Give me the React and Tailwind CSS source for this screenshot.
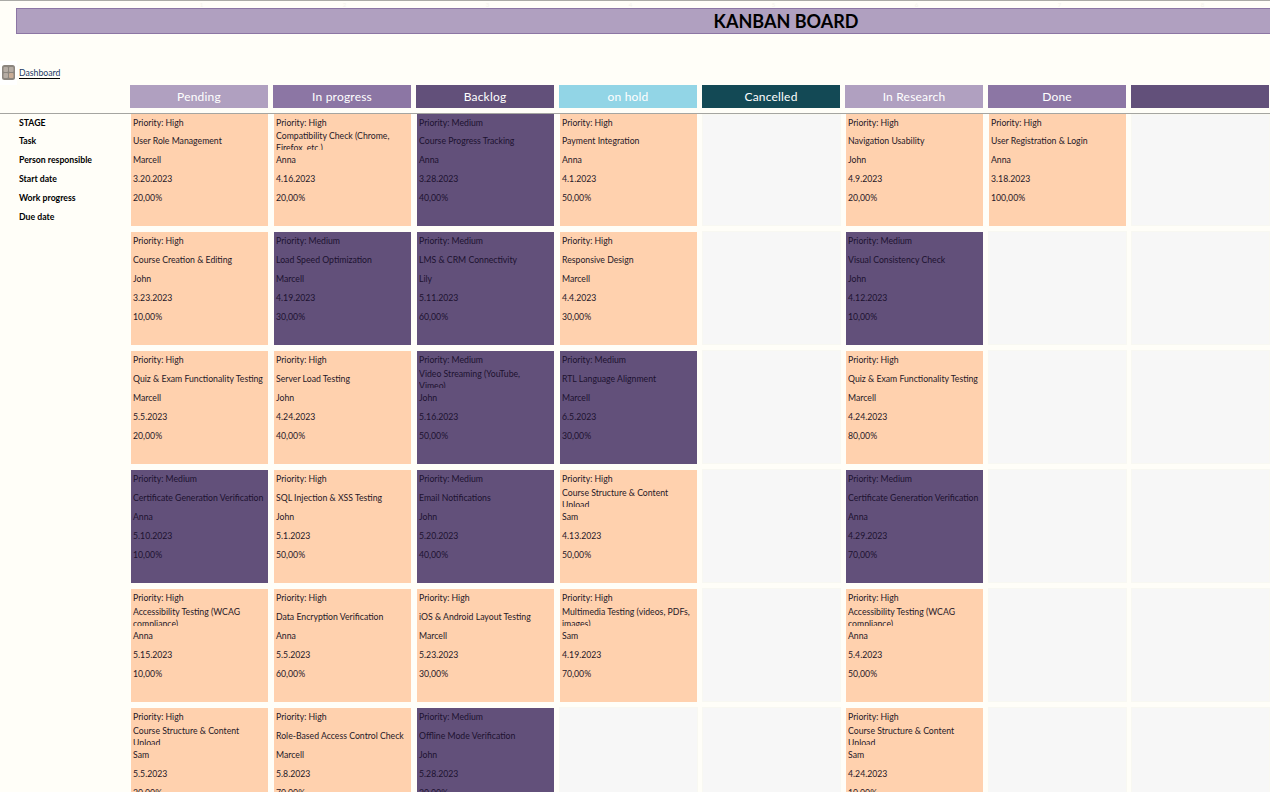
const font = "font-['Lato',sans-serif]"

const stages = [
  { name: 'Pending', cls: 'bg-[#b0a0c0]', no: 1 },
  { name: 'In progress', cls: 'bg-[#8c76a4]', no: 2 },
  { name: 'Backlog', cls: 'bg-[#62507a]', no: 3 },
  { name: 'on hold', cls: 'bg-[#92d5e6]', no: 4 },
  { name: 'Cancelled', cls: 'bg-[#134955]', no: 5 },
  { name: 'In Research', cls: 'bg-[#b0a0c0]', no: 6 },
  { name: 'Done', cls: 'bg-[#8c76a4]', no: 7 },
  { name: '', cls: 'bg-[#62507a]', no: 8 },
]

const labels = ['STAGE', 'Task', 'Person responsible', 'Start date', 'Work progress', 'Due date']

// [priority, task, person, start, progress] by row, one array per column
const board = [
  [
    ['High', 'User Role Management', 'Marcell', '3.20.2023', '20,00%'],
    ['High', 'Course Creation & Editing', 'John', '3.23.2023', '10,00%'],
    ['High', 'Quiz & Exam Functionality Testing', 'Marcell', '5.5.2023', '20,00%'],
    ['Medium', 'Certificate Generation Verification', 'Anna', '5.10.2023', '10,00%'],
    ['High', 'Accessibility Testing (WCAG compliance)', 'Anna', '5.15.2023', '10,00%'],
    ['High', 'Course Structure & Content Upload', 'Sam', '5.5.2023', '20,00%'],
  ],
  [
    ['High', 'Compatibility Check (Chrome, Firefox, etc.)', 'Anna', '4.16.2023', '20,00%'],
    ['Medium', 'Load Speed Optimization', 'Marcell', '4.19.2023', '30,00%'],
    ['High', 'Server Load Testing', 'John', '4.24.2023', '40,00%'],
    ['High', 'SQL Injection & XSS Testing', 'John', '5.1.2023', '50,00%'],
    ['High', 'Data Encryption Verification', 'Anna', '5.5.2023', '60,00%'],
    ['High', 'Role-Based Access Control Check', 'Marcell', '5.8.2023', '70,00%'],
  ],
  [
    ['Medium', 'Course Progress Tracking', 'Anna', '3.28.2023', '40,00%'],
    ['Medium', 'LMS & CRM Connectivity', 'Lily', '5.11.2023', '60,00%'],
    ['Medium', 'Video Streaming (YouTube,\nVimeo)', 'John', '5.16.2023', '50,00%'],
    ['Medium', 'Email Notifications', 'John', '5.20.2023', '40,00%'],
    ['High', 'iOS & Android Layout Testing', 'Marcell', '5.23.2023', '30,00%'],
    ['Medium', 'Offline Mode Verification', 'John', '5.28.2023', '20,00%'],
  ],
  [
    ['High', 'Payment Integration', 'Anna', '4.1.2023', '50,00%'],
    ['High', 'Responsive Design', 'Marcell', '4.4.2023', '30,00%'],
    ['Medium', 'RTL Language Alignment', 'Marcell', '6.5.2023', '30,00%'],
    ['High', 'Course Structure & Content Upload', 'Sam', '4.13.2023', '50,00%'],
    ['High', 'Multimedia Testing (videos, PDFs, images)', 'Sam', '4.19.2023', '70,00%'],
    null,
  ],
  [null, null, null, null, null, null],
  [
    ['High', 'Navigation Usability', 'John', '4.9.2023', '20,00%'],
    ['Medium', 'Visual Consistency Check', 'John', '4.12.2023', '10,00%'],
    ['High', 'Quiz & Exam Functionality Testing', 'Marcell', '4.24.2023', '80,00%'],
    ['Medium', 'Certificate Generation Verification', 'Anna', '4.29.2023', '70,00%'],
    ['High', 'Accessibility Testing (WCAG compliance)', 'Anna', '5.4.2023', '50,00%'],
    ['High', 'Course Structure & Content Upload', 'Sam', '4.24.2023', '10,00%'],
  ],
  [
    ['High', 'User Registration & Login', 'Anna', '3.18.2023', '100,00%'],
    null, null, null, null, null,
  ],
  [null, null, null, null, null, null],
]

function Card({ card, first }) {
  if (!card) {
    return <div className={`w-[139px] bg-[#f7f7f7] border border-[#f8f8f2] ${first ? '' : '-mt-px'}`} />
  }
  const [priority, task, person, start, progress] = card
  const medium = priority === 'Medium'
  return (
    <div className={`w-[138px] pl-[2px] border-l border-[#fffef8] text-[8.7px] ${medium ? 'bg-[#62507a] text-[#1d1230]' : 'bg-[#ffd1ae] text-[#1f1828]'}`}>
      <div className={`-mt-px flex items-center ${first ? 'h-[18px] pt-[2px]' : 'h-[19px]'}`}>Priority: {priority}</div>
      {/* wrapped tasks get cut by the fixed row height, like the sheet does */}
      <div className="h-[19px] overflow-hidden">
        <div className="-mt-px min-h-[21px] flex items-center leading-[12px] whitespace-pre-line">{task}</div>
      </div>
      <div className="h-[19px] flex items-center">{person}</div>
      <div className="h-[19px] flex items-center">{start}</div>
      <div className="h-[19px] flex items-center">{progress}</div>
    </div>
  )
}

export default function App() {
  return (
    <div className={`${font} w-[1270px] h-[802px] overflow-hidden bg-white`}>
      <div className="h-[792px] overflow-hidden bg-[#fffef8]">
        {/* sheet column letters, barely visible */}
        <div className="h-2 border-t border-[#aaaaa6] flex pl-[130px]">
          {stages.map((s) => (
            <div key={s.no} className="w-[143px] shrink-0 text-center text-[6px] leading-[7px] text-[#f4f3ec]">{s.no}</div>
          ))}
        </div>

        {/* title */}
        <div className="ml-4 w-[1540px] h-[26px] bg-[#b0a0c0] border border-[#8c76a4] flex items-center justify-center text-[18px] font-bold text-black">
          KANBAN BOARD
        </div>

        {/* dashboard link */}
        <div className="h-[51px] flex items-end">
          <div className="w-[17px] h-6 bg-white flex items-start pt-[4px] pl-[2px]">
            <svg width="13" height="15" viewBox="0 0 13 15">
              <rect width="13" height="15" rx="2.5" fill="#8b857e" />
              <rect x="1.5" y="2" width="4.5" height="5" rx="1" fill="#b5aca4" />
              <rect x="7" y="2" width="4.5" height="5" rx="1" fill="#b5aca4" />
              <rect x="1.5" y="8" width="4.5" height="5" rx="1" fill="#b5aca4" />
              <rect x="7" y="8" width="4.5" height="5" rx="1" fill="#c9ad97" />
            </svg>
          </div>
          <a className="ml-[2px] mb-[6px] text-[8.7px] leading-[11px] text-[#1c3a66] border-b border-black">Dashboard</a>
        </div>

        {/* stage headers */}
        <div className="flex pl-[130px] gap-[5px] h-[23px]">
          {stages.map((s) => (
            <div key={s.no} className={`w-[138px] shrink-0 flex items-center justify-center text-[12px] tracking-[0.2px] text-white ${s.cls}`}>
              {s.name}
            </div>
          ))}
        </div>

        <div className="h-[5px]" />
        <div className="h-px bg-[#a5a5a1]" />

        {/* board body */}
        <div className="grid grid-cols-[130px_repeat(8,143px)] grid-rows-[112px_113px_113px_113px_113px_113px] gap-y-[6px]">
          <div className="pl-[19px] text-[8.7px] font-bold text-black">
            {labels.map((l, i) => (
              <div key={l} className={`flex items-center ${i === 0 ? '-mt-px h-[18px] pt-[2px]' : 'h-[19px]'}`}>{l}</div>
            ))}
          </div>
          {[0, 1, 2, 3, 4, 5].map((r) =>
            board.map((col, c) => (
              <div
                key={`${r}-${c}`}
                className="flex"
                style={{ gridRow: r + 1, gridColumn: c + 2 }}
              >
                <Card card={col[r]} first={r === 0} />
              </div>
            ))
          )}
        </div>
      </div>
    </div>
  )
}
